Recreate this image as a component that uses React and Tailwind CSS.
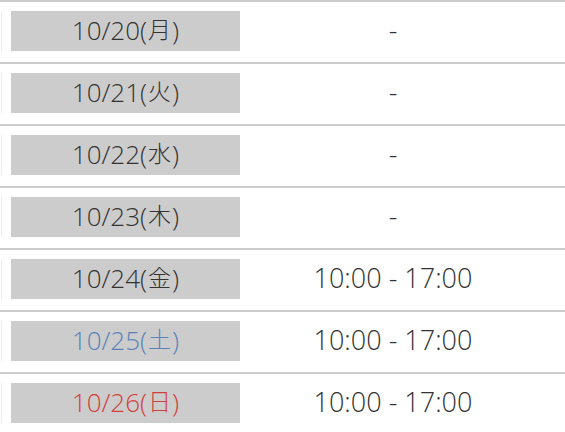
import React from "react";

const rows = [
  { day: "10/20", wd: "月", time: "-", color: "text-[#333333]" },
  { day: "10/21", wd: "火", time: "-", color: "text-[#333333]" },
  { day: "10/22", wd: "水", time: "-", color: "text-[#333333]" },
  { day: "10/23", wd: "木", time: "-", color: "text-[#333333]" },
  { day: "10/24", wd: "金", time: "10:00 - 17:00", color: "text-[#333333]" },
  { day: "10/25", wd: "土", time: "10:00 - 17:00", color: "text-[#5b82bb]" },
  { day: "10/26", wd: "日", time: "10:00 - 17:00", color: "text-[#d2403c]" },
];

export default function App() {
  return (
    <div
      className="w-[565px] h-[432px] overflow-hidden bg-white"
      style={{ fontFamily: '"Open Sans", "Noto Sans CJK JP", sans-serif' }}
    >
      {rows.map((row) => (
        <div
          key={row.day}
          className="flex border-t-2 border-[#cccccc] pt-[9px] pb-[11px]"
        >
          <div className="ml-[1px] border-l border-[#ececec] pl-[9px]">
            <div
              className={`w-[229px] h-[40px] pb-[3px] bg-[#cccccc] flex items-center justify-center text-[26px] leading-none font-light ${row.color}`}
            >
              {row.day}(<span className="text-[23px] px-[1px]">{row.wd}</span>)
            </div>
          </div>
          <div className="w-[306px] pb-[3px] flex items-center justify-center text-[27px] leading-none font-light text-[#333333]">
            {row.time}
          </div>
        </div>
      ))}
    </div>
  );
}
